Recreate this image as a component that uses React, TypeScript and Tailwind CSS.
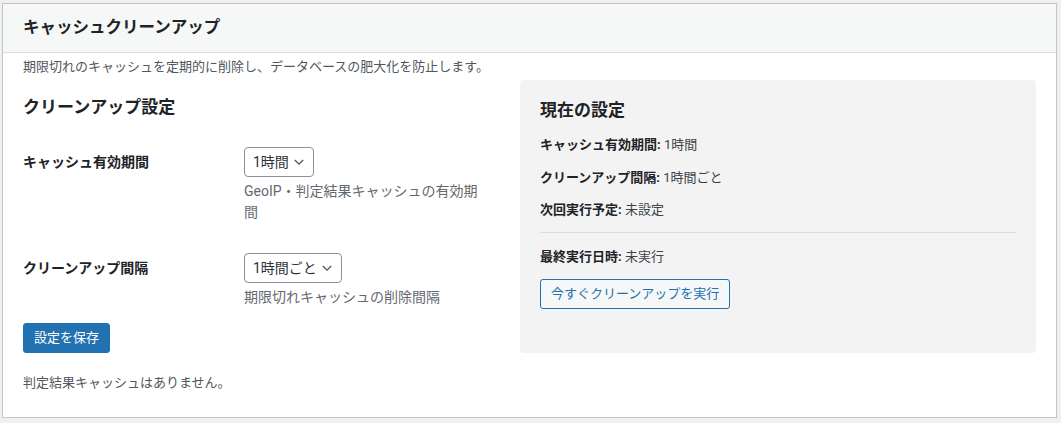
import React from 'react';

const Chevron: React.FC = () => (
  <svg width="12" height="12" viewBox="0 0 12 12" className="shrink-0">
    <path d="M1.8 4 L6 8.2 L10.2 4" fill="none" stroke="#50575e" strokeWidth="1.3" />
  </svg>
);

const FakeSelect: React.FC<{ value: string; width: string }> = ({ value, width }) => (
  <div
    className={`flex h-[30px] items-center justify-between rounded-[4px] border border-[#8c8f94] bg-white pl-[8px] pr-[8px] text-[14px] text-[#2c3338] ${width}`}
  >
    <span>{value}</span>
    <Chevron />
  </div>
);

const App: React.FC = () => {
  return (
    <div
      className="min-h-[423px] bg-[#f0f0f1] pt-[3px] pl-[2px] pr-[4px]"
      style={{ fontFamily: 'Roboto, "Noto Sans CJK JP", sans-serif' }}
    >
      <div className="border border-[#c3c4c7] bg-white">
        {/* header */}
        <div className="flex h-[49px] items-center border-b border-[#dcdcde] bg-[#f6f7f7] px-[20px]">
          <h2 className="text-[16.5px] font-bold leading-[24px] text-[#1d2327]">キャッシュクリーンアップ</h2>
        </div>

        <div className="px-[20px] pb-[24px]">
          <p className="mt-[4px] text-[13px] leading-[20px] text-[#50575e]">
            期限切れのキャッシュを定期的に削除し、データベースの肥大化を防止します。
          </p>

          <div className="mt-[3px] flex items-stretch gap-[20px]">
            {/* left column */}
            <div className="w-[477px]">
              <h3 className="mt-[15px] text-[17px] font-bold leading-[24px] text-[#1d2327]">クリーンアップ設定</h3>

              <div className="mt-[28px] flex">
                <div className="flex h-[30px] w-[221px] items-center text-[14px] font-bold text-[#1d2327]">
                  キャッシュ有効期間
                </div>
                <div>
                  <FakeSelect value="1時間" width="w-[70px]" />
                  <p className="mt-[4px] w-[240px] text-[14px] leading-[21px] text-[#646970]">
                    GeoIP・判定結果キャッシュの有効期間
                  </p>
                </div>
              </div>

              <div className="mt-[30px] flex">
                <div className="flex h-[30px] w-[221px] items-center text-[14px] font-bold text-[#1d2327]">
                  クリーンアップ間隔
                </div>
                <div>
                  <FakeSelect value="1時間ごと" width="w-[98px]" />
                  <p className="mt-[4px] text-[14px] leading-[21px] text-[#646970]">期限切れキャッシュの削除間隔</p>
                </div>
              </div>

              <button className="mt-[15px] h-[30px] rounded-[3px] border border-[#2271b1] bg-[#2271b1] px-[10px] text-[13px] text-white">
                設定を保存
              </button>
            </div>

            {/* right panel */}
            <div className="flex-1 rounded-[4px] bg-[#f3f3f3] px-[20px] pt-[18px]">
              <h3 className="text-[17px] font-bold leading-[24px] text-[#1d2327]">現在の設定</h3>
              <p className="mt-[13px] text-[13px] leading-[20px] text-[#3c434a]">
                <span className="font-bold text-[#1d2327]">キャッシュ有効期間:</span> 1時間
              </p>
              <p className="mt-[13px] text-[13px] leading-[20px] text-[#3c434a]">
                <span className="font-bold text-[#1d2327]">クリーンアップ間隔:</span> 1時間ごと
              </p>
              <p className="mt-[12px] text-[13px] leading-[20px] text-[#3c434a]">
                <span className="font-bold text-[#1d2327]">次回実行予定:</span> 未設定
              </p>
              <hr className="mt-[12px] border-0 border-t border-[#dcdcde]" />
              <p className="mt-[14px] text-[13px] leading-[20px] text-[#3c434a]">
                <span className="font-bold text-[#1d2327]">最終実行日時:</span> 未実行
              </p>
              <button className="mt-[12px] h-[30px] rounded-[3px] border border-[#2271b1] bg-[#f6f7f7] px-[10px] text-[13px] text-[#2271b1]">
                今すぐクリーンアップを実行
              </button>
            </div>
          </div>

          <p className="mt-[20px] text-[13px] leading-[20px] text-[#50575e]">判定結果キャッシュはありません。</p>
        </div>
      </div>
    </div>
  );
};

export default App;
